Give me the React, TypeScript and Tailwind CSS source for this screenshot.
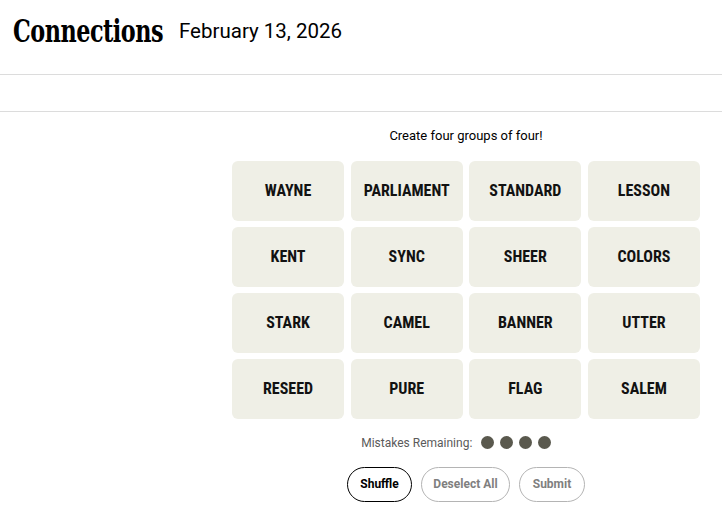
const words = [
  "WAYNE", "PARLIAMENT", "STANDARD", "LESSON",
  "KENT", "SYNC", "SHEER", "COLORS",
  "STARK", "CAMEL", "BANNER", "UTTER",
  "RESEED", "PURE", "FLAG", "SALEM",
];

const sans = "font-['Roboto','Liberation_Sans',Arial,sans-serif]";
const narrow = "font-['Liberation_Sans_Narrow','Roboto_Condensed','Liberation_Sans',sans-serif]";

export default function App() {
  return (
    <div className={`w-[722px] h-[516px] bg-white text-[#121212] ${sans}`}>
      <header className="h-[75px] border-b border-[#dcdcdc] flex items-start pt-[12px] pl-[13px]">
        <div className="w-[166px] shrink-0 whitespace-nowrap">
          <h1 className="inline-block origin-left scale-x-[0.8] font-['DejaVu_Serif_Condensed','DejaVu_Serif',serif] font-bold text-[31px] leading-[38px] tracking-[-0.6px] text-black">
            Connections
          </h1>
        </div>
        <span className="text-[20.5px] leading-[38px] font-normal text-black">February 13, 2026</span>
      </header>
      <div className="h-[37px] border-b border-[#dcdcdc]" />

      <main className="ml-[232px] w-[468px] flex flex-col items-center">
        <p className="mt-[14px] text-[13px] leading-[20px] text-black">Create four groups of four!</p>

        <div className="mt-[15px] w-full grid grid-cols-4 gap-[6.5px]">
          {words.map((w) => (
            <div
              key={w}
              className={`h-[59.5px] rounded-[6px] bg-[#efefe6] flex items-center justify-center text-[16px] font-bold ${narrow}`}
            >
              {w}
            </div>
          ))}
        </div>

        <div className="mt-[14px] flex items-center gap-[9px] -ml-[20px]">
          <span className="text-[12px] leading-[20px] text-[#5a5a5a]">Mistakes Remaining:</span>
          <div className="flex gap-[6.5px]">
            {[0, 1, 2, 3].map((i) => (
              <span key={i} className="w-[12.5px] h-[12.5px] rounded-full bg-[#5a594e]" />
            ))}
          </div>
        </div>

        <div className="mt-[14px] flex gap-[9px]">
          <button className="h-[35px] w-[65px] rounded-full border border-black text-[12px] font-bold text-black">
            Shuffle
          </button>
          <button className="h-[35px] w-[89px] rounded-full border border-[#b4b4b4] text-[12px] font-bold text-[#7f7f7f]">
            Deselect All
          </button>
          <button className="h-[35px] w-[66px] rounded-full border border-[#b4b4b4] text-[12px] font-bold text-[#7f7f7f]">
            Submit
          </button>
        </div>
      </main>
    </div>
  );
}
